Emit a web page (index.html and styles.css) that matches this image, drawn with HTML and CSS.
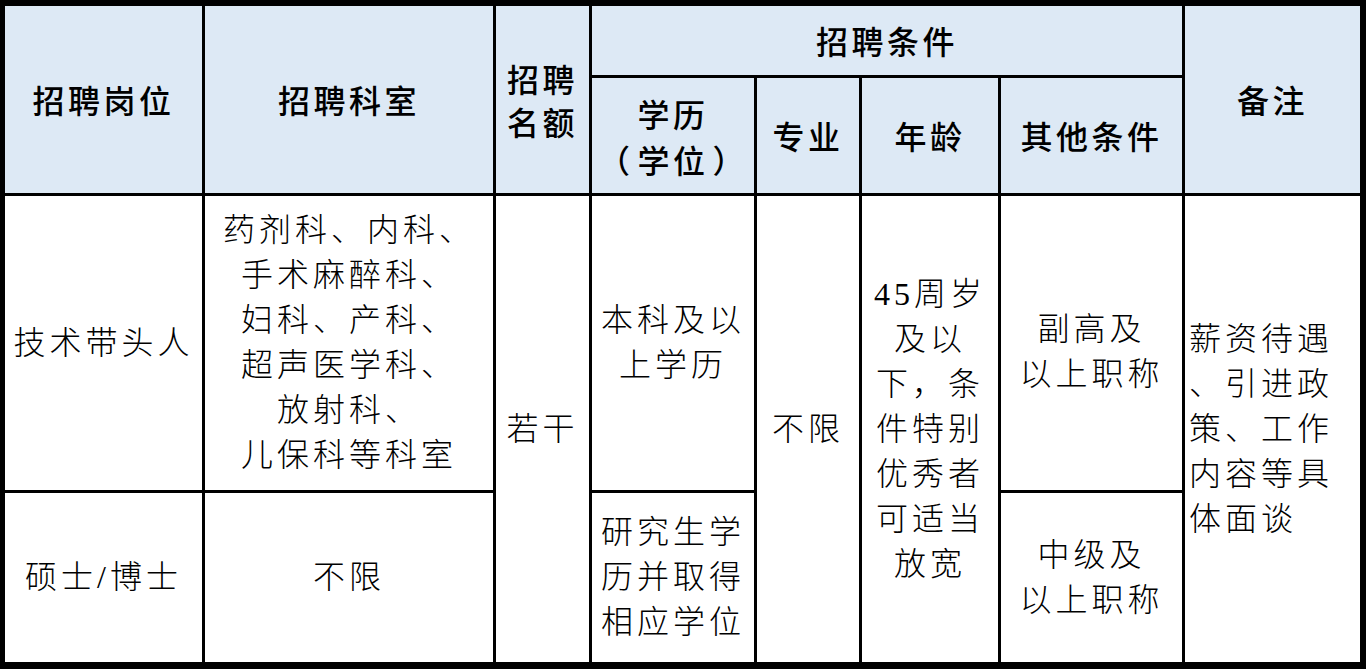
FILE: index.html
```html
<!DOCTYPE html>
<html lang="zh-CN">
<head>
<meta charset="utf-8">
<title>招聘表</title>
<link rel="stylesheet" href="styles.css">
</head>
<body>
<div class="sheet">
  <div class="cell head c1 r12">招聘岗位</div>
  <div class="cell head c2 r12">招聘科室</div>
  <div class="cell head c3 r12 tight">招聘<br>名额</div>
  <div class="cell head c47 r1">招聘条件</div>
  <div class="cell head c8 r12">备注</div>
  <div class="cell head c4 r2 tall"><div>学历<br><span class="paren">（</span>学位<span class="paren">）</span></div></div>
  <div class="cell head c5 r2">专业</div>
  <div class="cell head c6 r2">年龄</div>
  <div class="cell head c7 r2">其他条件</div>

  <div class="cell body c1 r3">技术带头人</div>
  <div class="cell body c2 r3">药剂科、内科、<br>手术麻醉科、<br>妇科、产科、<br>超声医学科、<br>放射科、<br>儿保科等科室</div>
  <div class="cell body c3 r34">若干</div>
  <div class="cell body c4 r3">本科及以<br>上学历</div>
  <div class="cell body c5 r34">不限</div>
  <div class="cell body c6 r34">45周岁<br>及以<br>下，条<br>件特别<br>优秀者<br>可适当<br>放宽</div>
  <div class="cell body c7 r3 low">副高及<br>以上职称</div>
  <div class="cell body c8 r34 left">薪资待遇<br>、引进政<br>策、工作<br>内容等具<br>体面谈</div>

  <div class="cell body c1 r4">硕士/博士</div>
  <div class="cell body c2 r4">不限</div>
  <div class="cell body c4 r4">研究生学<br>历并取得<br>相应学位</div>
  <div class="cell body c7 r4">中级及<br>以上职称</div>
</div>
</body>
</html>
```

FILE: styles.css
```css
html, body {
  margin: 0;
  padding: 0;
  background: #ffffff;
}

.sheet {
  width: 1366px;
  height: 669px;
  box-sizing: border-box;
  background: #000000;
  padding: 6px 6px 7px 5px;
  display: grid;
  grid-template-columns: 197px 288px 93px 162px 102px 136px 181px 175px;
  grid-template-rows: 69px 115px 294px 169px;
  gap: 3px;
}

.cell {
  display: flex;
  align-items: center;
  justify-content: center;
  text-align: center;
  color: #000000;
  font-size: 32px;
  letter-spacing: 3.5px;
  overflow: hidden;
}

.head {
  background: #dde9f5;
  font-family: "Noto Sans CJK SC", "Noto Sans", sans-serif;
  font-weight: 500;
  line-height: 41px;
}

.head.tight {
  line-height: 43px;
}

.head.tall {
  line-height: 46px;
}

.paren {
  margin: 0 4px;
}

.body {
  background: #ffffff;
  font-family: "Liberation Serif", "Noto Sans CJK SC", serif;
  font-weight: 300;
  letter-spacing: 4px;
  line-height: 45px;
}

.body.left {
  justify-content: flex-start;
  text-align: left;
  padding-left: 4px;
}

.body.low {
  padding-top: 18px;
  box-sizing: border-box;
}

.c1 { grid-column: 1; }
.c2 { grid-column: 2; }
.c3 { grid-column: 3; }
.c4 { grid-column: 4; }
.c5 { grid-column: 5; }
.c6 { grid-column: 6; }
.c7 { grid-column: 7; }
.c8 { grid-column: 8; }
.c47 { grid-column: 4 / 8; }

.r1 { grid-row: 1; }
.r2 { grid-row: 2; }
.r3 { grid-row: 3; }
.r4 { grid-row: 4; }
.r12 { grid-row: 1 / 3; }
.r34 { grid-row: 3 / 5; }
```
